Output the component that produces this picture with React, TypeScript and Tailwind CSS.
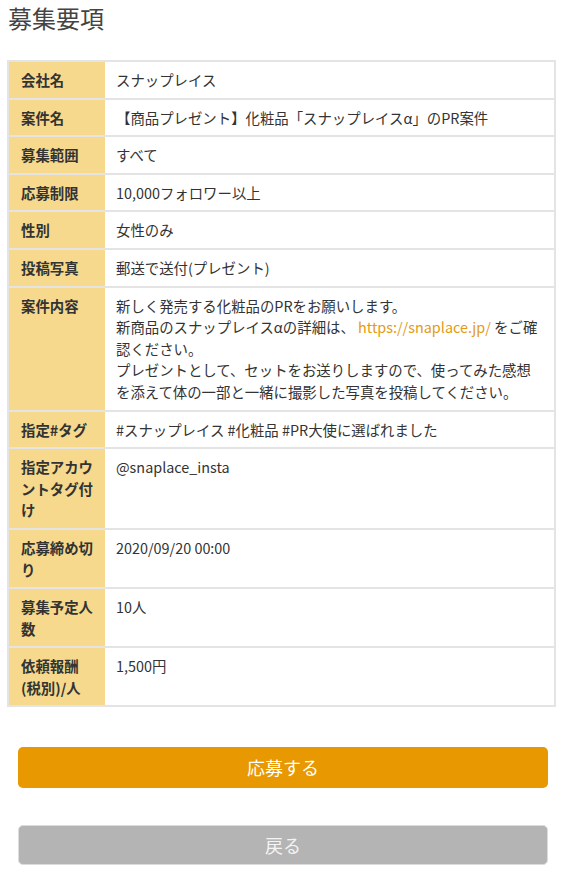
const rows: { label: string; value: React.ReactNode }[] = [
  { label: "会社名", value: "スナップレイス" },
  { label: "案件名", value: "【商品プレゼント】化粧品「スナップレイスα」のPR案件" },
  { label: "募集範囲", value: "すべて" },
  { label: "応募制限", value: "10,000フォロワー以上" },
  { label: "性別", value: "女性のみ" },
  { label: "投稿写真", value: "郵送で送付(プレゼント)" },
  {
    label: "案件内容",
    value: (
      <>
        新しく発売する化粧品のPRをお願いします。
        <br />
        新商品のスナップレイスαの詳細は、 <span className="text-[#e39b12]">https://snaplace.jp/</span> をご確認ください。
        <br />
        プレゼントとして、セットをお送りしますので、使ってみた感想を添えて体の一部と一緒に撮影した写真を投稿してください。
      </>
    ),
  },
  { label: "指定#タグ", value: "#スナップレイス #化粧品 #PR大使に選ばれました" },
  { label: "指定アカウントタグ付け", value: "@snaplace_insta" },
  { label: "応募締め切り", value: "2020/09/20 00:00" },
  { label: "募集予定人数", value: "10人" },
  { label: "依頼報酬(税別)/人", value: "1,500円" },
];

export default function App() {
  return (
    <div className="min-h-[881px] bg-white font-['Noto_Sans_CJK_JP','Noto_Sans',sans-serif] text-[#333]">
      {/* Page title */}
      <h1 className="pl-2 pt-[1px] text-[24px] leading-[34px] font-normal text-[#444]">募集要項</h1>

      {/* Requirements table */}
      <table className="mt-[25px] ml-[7px] w-[549px] border-collapse border-2 border-[#e4e4e4] text-[14.4px] leading-[21.6px]">
        <tbody>
          {rows.map((r) => (
            <tr key={r.label} className="border-b-2 border-[#e4e4e4]">
              <th className="w-[97px] bg-[#f6d98c] py-[7px] pl-3 pr-2 text-left align-top font-bold break-all">
                {r.label}
              </th>
              <td className="py-[7px] pl-[11px] pr-3 align-top">{r.value}</td>
            </tr>
          ))}
        </tbody>
      </table>

      {/* Actions */}
      <div className="mt-[40px] flex flex-col gap-[37px] pl-[18px] pr-[16px]">
        <button className="h-[41px] rounded-[5px] bg-[#e89800] text-[18px] text-white">応募する</button>
        <button className="h-[40px] rounded-[5px] border border-[#dcdcdc] bg-[#b4b4b4] text-[18px] text-[#f4f4f4]">
          戻る
        </button>
      </div>
    </div>
  );
}
